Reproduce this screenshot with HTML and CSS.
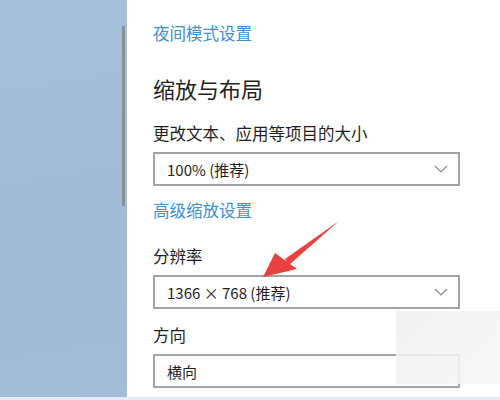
FILE: index.html
```html
<!DOCTYPE html>
<html lang="zh-CN">
<head>
  <meta charset="UTF-8">
  <meta name="viewport" content="width=device-width, initial-scale=1.0">
  <title>显示设置</title>
  <link rel="stylesheet" href="styles.css">
</head>
<body>
  <div class="screen">
    <div class="sidebar">
      <div class="scrollbar"></div>
    </div>

    <div class="panel">
      <a href="#" class="link link-top">夜间模式设置</a>
      <h1 class="heading">缩放与布局</h1>

      <div class="label">更改文本、应用等项目的大小</div>
      <div class="select">
        <span>100% (推荐)</span>
        <svg class="chevron" width="14" height="8" viewBox="0 0 14 8"><path d="M1 1 L7 7 L13 1" fill="none" stroke="#8a8a8a" stroke-width="1.2"/></svg>
      </div>

      <a href="#" class="link link-mid">高级缩放设置</a>

      <div class="label label-res">分辨率</div>
      <div class="select">
        <span>1366 × 768 (推荐)</span>
        <svg class="chevron" width="14" height="8" viewBox="0 0 14 8"><path d="M1 1 L7 7 L13 1" fill="none" stroke="#8a8a8a" stroke-width="1.2"/></svg>
      </div>

      <div class="label label-dir">方向</div>
      <div class="select">
        <span>横向</span>
      </div>

      <!-- 红色箭头标注 -->
      <svg class="arrow" width="80" height="60" viewBox="0 0 80 60">
        <path d="M78 2 L24 40 L28 46 Z" fill="#e8413f"/>
        <path d="M2 58 L14 34 L36 50 Z" fill="#e8413f"/>
      </svg>

      <div class="watermark"></div>
    </div>
  </div>
  <div class="taskbar"></div>
</body>
</html>
```

FILE: styles.css
```css
:root {
  --link-color: #3d8fd4;
  --text-color: #1f1f1f;
  --border-color: #a3a3a3;
  --side-bg: #a2bdd7;
}

body {
  margin: 0;
  padding: 0;
  font-family: "Noto Sans CJK SC", "Noto Sans", sans-serif;
  color: var(--text-color);
  background-color: #fff;
}

.screen {
  display: flex;
  height: 397px;
  overflow: hidden;
}

.sidebar {
  width: 127px;
  flex-shrink: 0;
  background: linear-gradient(170deg, #a5c0da 0%, #9fbbd5 60%, #a3bdd6 100%);
  position: relative;
}

.scrollbar {
  position: absolute;
  left: 122px;
  top: 26px;
  width: 3px;
  height: 180px;
  background-color: #8b9096;
}

.panel {
  flex-grow: 1;
  position: relative;
  padding-left: 26px;
  display: flex;
  flex-direction: column;
  align-items: flex-start;
}

.link {
  color: var(--link-color);
  text-decoration: none;
  font-size: 16.5px;
  line-height: 22px;
}

.link-top {
  margin-top: 22px;
}

.link-mid {
  margin-top: 13px;
}

.heading {
  margin: 29px 0 0 0;
  font-size: 22px;
  line-height: 30px;
  font-weight: normal;
}

.label {
  margin-top: 19px;
  font-size: 16.5px;
  line-height: 22px;
}

.label-res {
  margin-top: 24px;
}

.label-dir {
  margin-top: 15px;
}

.select {
  margin-top: 8px;
  box-sizing: border-box;
  width: 307px;
  height: 34px;
  border: 2px solid var(--border-color);
  display: flex;
  align-items: center;
  justify-content: space-between;
  padding: 0 10px 0 12px;
  font-size: 15px;
}

.chevron {
  display: block;
}

.arrow {
  position: absolute;
  left: 134px;
  top: 219px;
}

.watermark {
  position: absolute;
  left: 269px;
  top: 311px;
  width: 110px;
  height: 73px;
  background: linear-gradient(135deg, rgba(240, 240, 240, 0.85), rgba(246, 246, 246, 0.9));
}

.taskbar {
  height: 3px;
  background-color: #e4edf7;
}
```
